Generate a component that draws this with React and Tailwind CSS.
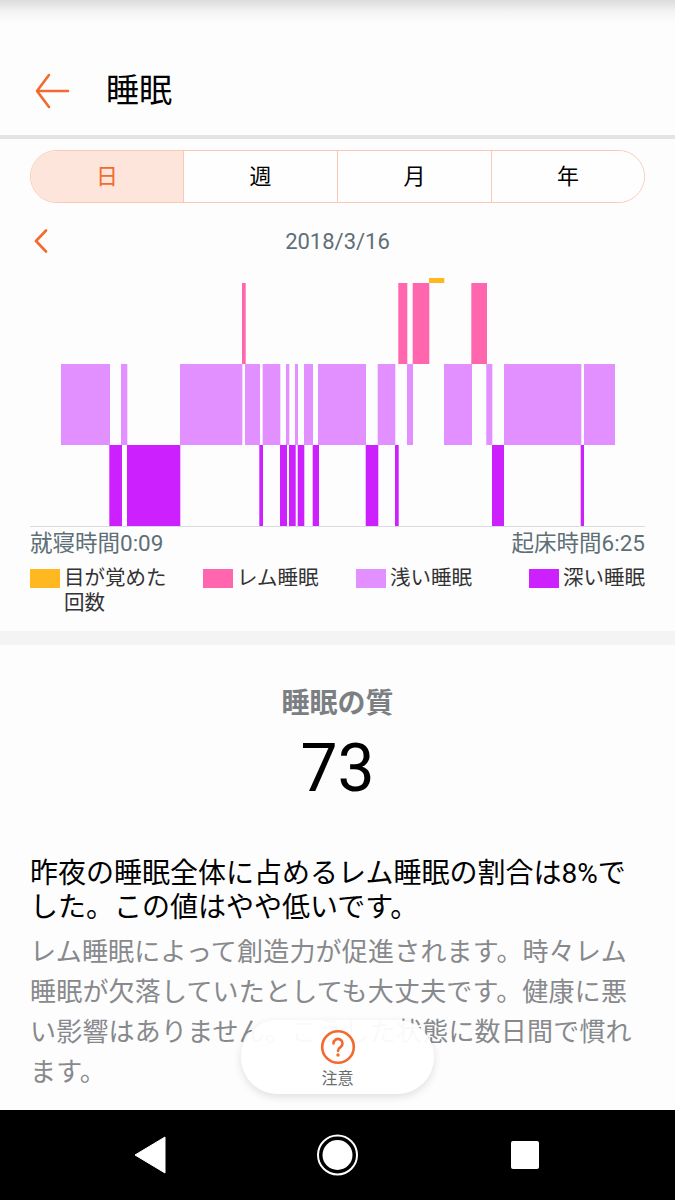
import React from 'react'

const light = [[61,110],[121,127.3],[180,242.3],[245,260],[262.7,280.3],[286,289.3],[295,298],[304,313],[318,366],[377.7,395.3],[407,413],[444,472],[486.3,492.3],[504,581.3],[584,615]]
const deep = [[109.3,122],[127,180.3],[259.3,263],[280,287],[289,295.7],[297.7,304.3],[312.7,319],[365.7,378.3],[395,398.7],[492,504],[580.7,584]]
const rem = [[242,245.7],[398.3,407.3],[412.7,429.3],[471.3,487]]

const tabs = ['日', '週', '月', '年']

const SleepChart = () => (
	<svg width="675" height="252" viewBox="0 276 675 252" className="block">
		{rem.map(([a, b]) => <rect key={a} x={a} y="283" width={b - a} height="81" fill="#ff66ad" />)}
		{light.map(([a, b]) => <rect key={a} x={a} y="364" width={b - a} height="81" fill="#e28fff" />)}
		{deep.map(([a, b]) => <rect key={a} x={a} y="445" width={b - a} height="81" fill="#cc20ff" />)}
		<rect x="429" y="278" width="15.3" height="5" fill="#ffb81f" />
		<rect x="30" y="526" width="615" height="1" fill="#d9dde3" />
	</svg>
)

const Legend = ({ color, children, className }) => (
	<div className={`flex items-start gap-[4px] ${className}`}>
		<span className={`mt-[3px] h-[19px] w-[30px] shrink-0 ${color}`} />
		<span className="text-[20.5px] leading-[25px] text-[#333]">{children}</span>
	</div>
)

export default function App() {
	return (
		<div className="relative flex h-[1200px] w-[675px] flex-col overflow-hidden bg-[#fdfdfe] font-['Roboto','Noto_Sans_CJK_JP',sans-serif]">
			<div className="h-[24px] shrink-0 bg-gradient-to-b from-[#dcdcdc] via-[#f4f4f4] to-[#fdfdfe]" />

			{/* header */}
			<div className="flex h-[111px] shrink-0 items-center pt-[22px] pl-[34px]">
				<svg width="36" height="36" viewBox="0 0 36 36" fill="none" stroke="#f26a2e" strokeWidth="2.6" strokeLinecap="round" strokeLinejoin="round">
					<path d="M34 18H3M15 2 3 18l12 16" />
				</svg>
				<span className="ml-[36px] text-[33px] leading-none font-normal text-black">睡眠</span>
			</div>
			<div className="h-[4px] shrink-0 bg-[#e4e4e4]" />

			{/* tabs */}
			<div className="mx-[30px] mt-[11px] grid h-[53px] shrink-0 grid-cols-[152px_154px_154px_1fr] overflow-hidden rounded-[27px] border border-[#f9c9b5]">
				{tabs.map((t, i) => (
					<div key={t} className={`flex items-center justify-center text-[22px] ${i === 0 ? 'bg-[#fde5db] text-[#f26a2e]' : 'border-l border-[#f9c9b5] bg-[#fefefe] text-black'}`}>{t}</div>
				))}
			</div>

			{/* date */}
			<div className="relative mt-[21px] flex h-[34px] shrink-0 items-center justify-center">
				<svg width="14" height="24" viewBox="0 0 14 24" fill="none" stroke="#f26a2e" strokeWidth="2.6" strokeLinecap="round" strokeLinejoin="round" className="absolute top-[5px] left-[34px]">
					<path d="M12 1.5 2 12l10 10.500" />
				</svg>
				<span className="text-[22px] text-[#5f6f76]">2018/3/16</span>
			</div>

			<div className="mt-[18px] shrink-0"><SleepChart /></div>

			<div className="mt-[1px] flex justify-between px-[30px] text-[22.5px] leading-[28px] text-[#5f6f76]">
				<span>就寝時間0:09</span>
				<span>起床時間6:25</span>
			</div>

			{/* legend */}
			<div className="mt-[9px] flex h-[65px] shrink-0 px-[30px]">
				<Legend color="bg-[#ffb81f]" className="w-[173px] pr-[34px]">目が覚めた回数</Legend>
				<Legend color="bg-[#ff66ad]" className="w-[153px]">レム睡眠</Legend>
				<Legend color="bg-[#e28fff]" className="w-[173px]">浅い睡眠</Legend>
				<Legend color="bg-[#cc20ff]" className="whitespace-nowrap">深い睡眠</Legend>
			</div>
			<div className="h-[14px] shrink-0 bg-[#f4f4f4]" />

			{/* quality */}
			<div className="flex min-h-0 flex-1 flex-col overflow-hidden px-[30px]">
				<div className="mt-[43px] text-center text-[28px] leading-[32px] font-bold text-[#7c7f82]">睡眠の質</div>
				<div className="mt-[13px] text-center text-[66px] leading-[72px] text-black">73</div>
				<p className="mt-[52px] text-[28px] leading-[34px] text-black">昨夜の睡眠全体に占めるレム睡眠の割合は8%でした。この値はやや低いです。</p>
				<p className="mt-[7px] text-[26px] leading-[40px] tracking-[0.2px] text-[#87898c]">レム睡眠によって創造力が促進されます。時々レム睡眠が欠落していたとしても大丈夫です。健康に悪い影響はありません。こうした状態に数日間で慣れます。</p>
			</div>

			{/* nav */}
			<div className="flex h-[90px] shrink-0 items-center bg-black">
				<svg width="675" height="90" viewBox="0 1110 675 90" className="block">
					<path d="M165 1137v36l-30-18z" fill="#fff" stroke="#fff" strokeWidth="1" strokeLinejoin="round" />
					<circle cx="337.500" cy="1155" r="19.500" fill="none" stroke="#fff" strokeWidth="2" />
					<circle cx="337.500" cy="1155" r="15" fill="#fff" />
					<rect x="511" y="1141" width="28" height="28" rx="2" fill="#fff" />
				</svg>
			</div>

			{/* floating button */}
			<div className="absolute top-[1020px] left-[241px] flex h-[74px] w-[193px] flex-col items-center rounded-[37px] bg-white/95 pt-[9px] shadow-[0_3px_8px_rgba(0,0,0,0.12)]">
				<svg width="36" height="36" viewBox="0 0 36 36" fill="none">
					<circle cx="18" cy="18" r="15.800" stroke="#f26a2e" strokeWidth="2.600" />
					<path d="M13.500 14.500a4.500 4.500 0 1 1 7 3.700c-1.600 1.100-2.500 1.900-2.500 3.800" stroke="#f26a2e" strokeWidth="2.600" strokeLinecap="round" />
					<circle cx="18" cy="26" r="1.700" fill="#f26a2e" />
				</svg>
				<span className="mt-[4px] text-[16px] leading-[20px] text-[#6a6d70]">注意</span>
			</div>
		</div>
	)
}
